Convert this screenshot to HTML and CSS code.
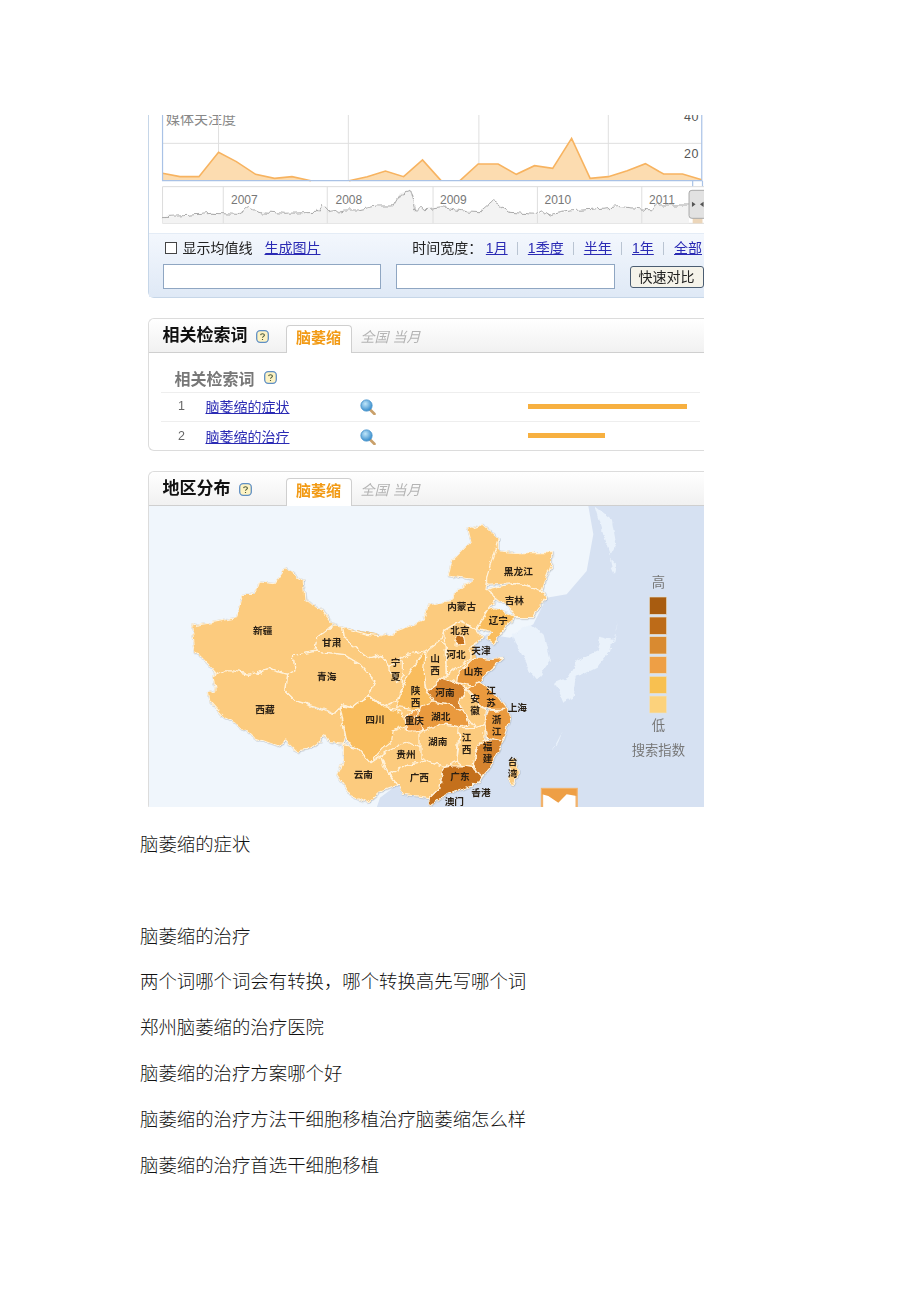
FILE: index.html
```html
<!DOCTYPE html>
<html lang="zh">
<head>
<meta charset="utf-8">
<title>脑萎缩</title>
<link rel="stylesheet" href="styles.css">
</head>
<body>
<svg class="defs" width="0" height="0" aria-hidden="true">
  <defs>
    <radialGradient id="lens" cx="40%" cy="35%" r="70%"><stop offset="0" stop-color="#bfe6fa"/><stop offset="1" stop-color="#2f86c8"/></radialGradient>
    <filter id="rough" x="-5%" y="-5%" width="110%" height="110%" color-interpolation-filters="sRGB">
      <feTurbulence type="fractalNoise" baseFrequency=".035" numOctaves="3" seed="4"/>
      <feDisplacementMap in="SourceGraphic" scale="20" xChannelSelector="R" yChannelSelector="G"/>
    </filter>
    <filter id="jitter" x="-2%" y="-20%" width="104%" height="140%" color-interpolation-filters="sRGB">
      <feTurbulence type="fractalNoise" baseFrequency=".06 .02" numOctaves="2" seed="9"/>
      <feDisplacementMap in="SourceGraphic" scale="22" xChannelSelector="R" yChannelSelector="G"/>
    </filter>
    <symbol id="help" viewBox="0 0 13 13">
      <rect x=".7" y=".7" width="11.6" height="11.6" rx="3.5" fill="#fdf3c4" stroke="#5f8fc4" stroke-width="1.3"/>
      <path d="M4.6 5.1C4.7 3.4 8.4 3.3 8.4 5.2 8.4 6.4 6.5 6.4 6.5 7.8M6.5 9v1" fill="none" stroke="#4c5a3a" stroke-width="1.1"/>
    </symbol>
    <symbol id="mag" viewBox="0 0 16 16">
      <path d="M10 10.5 14.5 15" stroke="#c9a06a" stroke-width="2.6" stroke-linecap="round"/>
      <circle cx="6.5" cy="6.5" r="5.6" fill="url(#lens)" stroke="#4d98cf"/>
    </symbol>
  </defs>
</svg>

<main class="figure">
  <section class="panel trend">
    <svg class="trend-chart" width="555" height="118" viewBox="149 115 555 118">
      <text class="chart-title" x="166" y="124">媒体关注度</text>
      <text class="axis" x="684" y="121">40</text>
      <text class="axis" x="684" y="158">20</text>
      <g transform="translate(140,105) scale(.3636,.3333)">
        <g class="grid">
          <path d="M216 0V227M573 0V227M932 0V227M1288 0V227M62 115H1545"/>
        </g>
        <path class="area" d="M62 205 110 215 162 215 216 142 265 170 318 208 370 220 418 215 470 227 575 227 625 215 675 198 725 215 777 165 828 227 880 227 930 177 985 177 1035 208 1085 182 1135 190 1187 100 1238 220 1288 215 1340 197 1390 176 1440 207 1492 207 1545 224V227H62Z"/>
        <path class="area-line" d="M62 205 110 215 162 215 216 142 265 170 318 208 370 220 418 215 470 227M575 227 625 215 675 198 725 215 777 165 828 227M880 227 930 177 985 177 1035 208 1085 182 1135 190 1187 100 1238 220 1288 215 1340 197 1390 176 1440 207 1492 207 1545 224"/>
        <path class="frame" d="M62 30V227H1545V30M1520 227V255M1547 227V255"/>
        <rect class="ov-box" x="62" y="245" width="1500" height="110"/>
        <path class="ov-fill" d="M62 335 120 332 200 325 265 328 295 308 330 320 400 325 490 322 500 298 520 322 560 315 600 315 650 303 695 303 715 265 745 255 758 312 800 310 830 305 870 312 900 318 935 320 970 287 1020 322 1090 328 1110 320 1125 330 1180 318 1250 312 1320 305 1410 315 1415 300 1510 300V355H62Z"/>
        <path class="ov-grid" d="M229 245V355M515 245V355M806 245V355M1093 245V355M1380 245V355"/>
        <g filter="url(#jitter)">
          <path class="ov-line" d="M62 335 120 332 200 325 265 328 295 308 330 320 400 325 490 322 500 298 520 322 560 315 600 315 650 303 695 303 715 265 745 255 758 312 800 310 830 305 870 312 900 318 935 320 970 287 1020 322 1090 328 1110 320 1125 330 1180 318 1250 312 1320 305 1410 315 1415 300 1510 300"/>
        </g>
        <rect class="handle-tail" x="1520" y="335" width="27" height="20"/>
        <rect class="handle" x="1510" y="256" width="50" height="84" rx="8"/>
        <path class="handle-arrows" d="M1518 290 1528 298 1518 306ZM1550 290 1540 298 1550 306Z"/>
      </g>
      <text class="year" x="231" y="204">2007</text>
      <text class="year" x="335.5" y="204">2008</text>
      <text class="year" x="440" y="204">2009</text>
      <text class="year" x="544.5" y="204">2010</text>
      <text class="year" x="649" y="204">2011</text>
    </svg>
    <div class="controls">
      <div class="row">
        <div class="row-left">
          <span class="check"></span>
          <span class="check-label">显示均值线</span>
          <a class="link" href="#">生成图片</a>
        </div>
        <div class="row-right">
          <span class="range-label">时间宽度：</span>
          <a class="link" href="#">1月</a><i class="sep"></i>
          <a class="link" href="#">1季度</a><i class="sep"></i>
          <a class="link" href="#">半年</a><i class="sep"></i>
          <a class="link" href="#">1年</a><i class="sep"></i>
          <a class="link" href="#">全部</a>
        </div>
      </div>
      <div class="row-inputs">
        <span class="field"></span>
        <span class="field"></span>
        <span class="btn">快速对比</span>
      </div>
    </div>
  </section>

  <section class="panel related">
    <header class="head">
      <div class="title-wrap"><h2 class="title">相关检索词</h2><svg class="help" width="13" height="13"><use href="#help"/></svg></div>
      <span class="tab">脑萎缩</span>
      <span class="scope">全国 当月</span>
    </header>
    <div class="table-head"><span>相关检索词</span><svg class="help" width="13" height="13"><use href="#help"/></svg></div>
    <div class="tr">
      <span class="num">1</span><a class="link" href="#">脑萎缩的症状</a>
      <svg class="mag" width="16" height="16"><use href="#mag"/></svg>
      <span class="bar" style="width:159px"></span>
    </div>
    <div class="tr">
      <span class="num">2</span><a class="link" href="#">脑萎缩的治疗</a>
      <svg class="mag" width="16" height="16"><use href="#mag"/></svg>
      <span class="bar" style="width:77px"></span>
    </div>
  </section>

  <section class="panel region">
    <header class="head">
      <div class="title-wrap"><h2 class="title">地区分布</h2><svg class="help" width="13" height="13"><use href="#help"/></svg></div>
      <span class="tab">脑萎缩</span>
      <span class="scope">全国 当月</span>
    </header>
    <svg class="map" width="555" height="302" viewBox="149 505 555 302">
      <g transform="translate(140,500) scale(.33333)">
        <g transform="translate(840,0)">
          <path class="sea" d="M505 15 520 100 500 210 440 280 380 290 340 370 270 410 200 400 150 450 100 600 0 800 -120 890 -130 920H860V15Z"/>
          <g class="isle" filter="url(#rough)">
            <path d="M280 400 330 370 370 400 390 480 350 535 325 500 290 430Z"/>
            <path d="M590 365 580 420 540 410 530 450 470 480 440 530 405 545 430 605 460 590 470 530 530 500 570 450Z"/>
            <path d="M525 15 575 55 588 130 572 160 550 95Z"/>
            <path d="M570 170 590 190 585 222 575 200Z"/>
            <path d="M425 688 412 720 395 750 405 725Z"/>
          </g>
          <g class="inset">
            <rect x="366" y="864" width="104" height="70"/>
            <path class="inset-land" d="M366 864H470V885L440 880 415 905 385 885 366 880Z"/>
          </g>
        </g>
        <g class="china">
          <g filter="url(#rough)">
            <g class="p0 base">
              <path d="M570 380 605 378 735 405 850 360 860 420 900 520 900 800 720 800 600 640 525 450Z"/>
              <path d="M840 400 1000 400 1010 560 1040 800 900 820 800 700Z"/>
            </g>
            <g class="p0">
              <path d="M155 375 215 365 290 350 305 280 345 280 360 240 405 245 440 197 490 240 495 300 540 320 580 370 570 378 530 410 525 450 460 465 465 510 440 520 390 505 330 520 280 510 250 510 235 525 205 490 165 450Z"/>
              <path d="M220 525 250 510 280 510 330 520 390 505 440 520 435 565 470 600 540 625 580 640 600 620 615 700 610 730 570 725 555 705 500 745 470 750 440 720 410 735 340 710 290 670 250 645 210 600 205 575 225 570Z"/>
              <path d="M460 465 530 450 610 460 660 490 705 540 690 580 665 600 640 620 600 610 585 640 540 620 470 600 435 565 440 520 465 510Z"/>
              <path d="M605 378 580 375 570 380 530 410 525 450 610 460 660 490 705 540 690 580 730 620 770 600 790 545 750 500 720 460 690 470 650 440 610 410Z"/>
              <path d="M750 470 790 480 790 520 770 545 750 510Z"/>
              <path d="M610 730 650 740 690 785 720 765 730 800 750 820 775 850 720 870 680 905 630 880 590 820 610 780Z"/>
              <path d="M720 765 760 740 800 720 840 740 860 780 800 790 750 820 730 790Z"/>
            </g>
            <g class="p1">
              <path d="M600 615 640 620 665 600 690 585 730 620 770 625 800 650 830 660 760 690 755 720 730 740 690 785 650 740 620 720Z"/>
              <path d="M855 450 855 560 885 600 850 640 820 625 770 620 790 545 820 500Z"/>
            </g>
            <path class="p2" d="M795 650 825 625 850 640 860 680 830 690 800 690Z"/>
            <g transform="translate(840,0)">
              <g class="p0">
                <path d="M-235 378-160 400-105 405-50 385 10 360 25 312 85 300 125 260 160 235 85 225 95 180 150 125 140 85 190 70 235 110 230 150 200 230 195 265 230 290 205 325 170 385 120 360 70 390 60 420 10 450-40 460-90 500-120 460-150 470-190 440-230 410Z"/>
                <path d="M235 110 235 150 290 155 395 155 395 190 375 240 365 270 290 245 200 250 200 230Z"/>
                <path d="M195 265 290 245 365 270 375 290 340 350 290 350 265 320 230 290Z"/>
                <path d="M70 390 120 360 170 385 190 410 150 440 150 470 120 495 80 520 75 430Z"/>
                <path d="M15 455 60 420 75 430 78 520 70 530 20 570 10 520Z"/>
                <path d="M140 565 175 610 200 625 195 670 165 680 135 640 115 600Z"/>
                <path d="M120 680 165 680 195 670 195 715 170 750 160 800 130 795 110 780 118 720Z"/>
                <path d="M0 690 60 670 118 680 110 780 70 800 20 780 0 770Z"/>
                <path d="M-90 820-40 790 20 780 70 800 60 860 30 890-50 880-65 850Z"/>
                <path d="M270 780 290 775 292 820 280 855 265 830Z"/>
              </g>
              <path class="p1" d="M230 320 290 350 265 370 220 430 200 415 215 395 170 385 205 325Z"/>
              <path class="p5" d="M105 432 112 405 130 405 135 430Z"/>
              <path class="p3" d="M115 510 160 470 215 475 248 472 205 510 180 545 155 555 110 545Z"/>
              <path class="p4" d="M20 570 70 530 110 545 140 565 115 600 130 630 90 610 40 600Z"/>
              <path class="p3" d="M140 565 155 555 180 545 225 580 260 625 205 625 175 610 150 570Z"/>
              <path class="p3" d="M205 630 262 625 270 660 250 720 200 710 195 670Z"/>
              <path class="p4" d="M195 715 250 720 210 800 185 830 160 790 170 750Z"/>
              <path class="p3" d="M0 615 40 600 90 610 130 630 145 665 120 680 60 670 10 690-10 650Z"/>
              <path class="p5" d="M70 800 95 795 130 795 160 800 185 825 170 850 100 870 60 890 30 915 30 890 60 860Z"/>
            </g>
          </g>
        </g>
        <g class="labels" transform="translate(0,-6)">
          <text x="368" y="393">新疆</text><text x="575" y="428">甘肃</text>
          <text x="767" y="490">宁</text><text x="767" y="530">夏</text>
          <text x="560" y="532">青海</text>
          <text x="827" y="573">陕</text><text x="827" y="608">西</text>
          <text x="885" y="477">山</text><text x="885" y="512">西</text>
          <text x="375" y="630">西藏</text><text x="705" y="660">四川</text>
          <text x="823" y="663">重庆</text><text x="798" y="765">贵州</text>
          <text x="670" y="825">云南</text><text x="838" y="835">广西</text>
          <g transform="translate(840,0)">
            <text x="295" y="215">黑龙江</text><text x="283" y="302">吉林</text>
            <text x="125" y="320">内蒙古</text><text x="235" y="362">辽宁</text>
            <text x="120" y="392">北京</text><text x="183" y="452">天津</text>
            <text x="108" y="465">河北</text><text x="160" y="515">山东</text>
            <text x="75" y="580">河南</text>
            <text x="213" y="573">江</text><text x="213" y="608">苏</text>
            <text x="165" y="598">安</text><text x="165" y="634">徽</text>
            <text x="292" y="625">上海</text>
            <text x="230" y="660">浙</text><text x="230" y="697">江</text>
            <text x="62" y="650">湖北</text><text x="53" y="727">湖南</text>
            <text x="140" y="713">江</text><text x="140" y="750">西</text>
            <text x="203" y="740">福</text><text x="203" y="778">建</text>
            <text x="278" y="787">台</text><text x="278" y="823">湾</text>
            <text x="120" y="830">广东</text><text x="183" y="880">香港</text>
            <text x="103" y="905">澳门</text>
            <text class="legend-text" x="715" y="248">高</text>
            <text class="legend-text" x="715" y="678">低</text>
            <text class="legend-text" x="715" y="752">搜索指数</text>
          </g>
        </g>
        <g transform="translate(840,0)">
          <rect class="swatch s1" x="688" y="288" width="52" height="52"/>
          <rect class="swatch s2" x="688" y="348" width="52" height="52"/>
          <rect class="swatch s3" x="688" y="407" width="52" height="52"/>
          <rect class="swatch s4" x="688" y="467" width="52" height="50"/>
          <rect class="swatch s5" x="688" y="526" width="52" height="51"/>
          <rect class="swatch s6" x="688" y="585" width="52" height="51"/>
        </g>
      </g>
    </svg>
  </section>
</main>

<article class="doc">
  <p>脑萎缩的症状</p>
  <p class="blank"></p>
  <p>脑萎缩的治疗</p>
  <p>两个词哪个词会有转换，哪个转换高先写哪个词</p>
  <p>郑州脑萎缩的治疗医院</p>
  <p>脑萎缩的治疗方案哪个好</p>
  <p>脑萎缩的治疗方法干细胞移植治疗脑萎缩怎么样</p>
  <p>脑萎缩的治疗首选干细胞移植</p>
</article>
</body>
</html>
```
FILE: styles.css
```css
* { box-sizing: border-box; }
html, body { margin: 0; padding: 0; background: #fff; }
body {
  font-family: "Liberation Sans", "Noto Sans CJK SC", sans-serif;
  color: #222;
  height: 1302px;
  overflow: hidden;
}
.defs { position: absolute; }
svg { display: block; }

.figure {
  margin: 115px 0 0 148px;
  width: 556px;
  height: 692px;
  overflow: hidden;
  display: flex;
  flex-direction: column;
  gap: 20px;
  filter: blur(.45px);
}
.panel {
  width: 556px;
  flex: none;
  border: 1px solid #dcdcdc;
  border-right: 0;
  border-radius: 6px 0 0 6px;
  background: #fff;
}

/* trend panel */
.trend {
  border: 0;
  border-left: 1px solid #c6d6e8;
  border-bottom: 1px solid #c6d6e8;
  border-radius: 0 0 0 6px;
  height: 183px;
}
.chart-title { font: 14px "Noto Sans CJK SC", sans-serif; fill: #888; }
.axis { font: 12.5px "Liberation Sans", sans-serif; fill: #555; letter-spacing: .5px; }
.year { font: 12px "Liberation Sans", sans-serif; fill: #777; }
.grid path { fill: none; stroke: #dfdfdf; stroke-width: 1; vector-effect: non-scaling-stroke; }
.area { fill: #fcdcb0; }
.area-line { fill: none; stroke: #f7b360; stroke-width: 1.6; vector-effect: non-scaling-stroke; }
.frame { fill: none; stroke: #a9c2e6; stroke-width: 1.2; vector-effect: non-scaling-stroke; }
.ov-box { fill: #fff; stroke: #dcdcdc; stroke-width: 1; vector-effect: non-scaling-stroke; }
.ov-fill { fill: #f3f3f3; }
.ov-grid { fill: none; stroke: #dedede; stroke-width: 1; vector-effect: non-scaling-stroke; }
.ov-line { fill: none; stroke: #aaa; stroke-width: 1; vector-effect: non-scaling-stroke; }
.handle-tail { fill: #ecd6ba; }
.handle { fill: #e2e2e2; stroke: #aaa; stroke-width: 1; vector-effect: non-scaling-stroke; }
.handle-arrows { fill: #555; }

.controls {
  height: 64px;
  padding: 4px 0 0 13.5px;
  background: linear-gradient(#f3f7fd, #dfe9f6);
  border-top: 1px solid #e4ecf6;
  display: flex;
  flex-direction: column;
  gap: 6px;
}
.row {
  height: 20px;
  padding-right: 2px;
  display: flex;
  justify-content: space-between;
  align-items: center;
  font-size: 14px;
  line-height: 20px;
}
.row-left, .row-right { display: flex; align-items: center; }
.row-left { padding-left: 2px; }
.row-right { gap: 9.6px; }
.check {
  width: 12px;
  height: 12px;
  border: 1px solid #444;
  background: #fff;
  margin-right: 6px;
}
.check-label { margin-right: 12px; }
.range-label { margin-right: -6px; }
.sep { width: 1px; height: 13px; background: #b9c4d2; }
.link { color: #2a2ab4; text-decoration: underline; }
.row-inputs { display: flex; gap: 15px; align-items: center; height: 25px; }
.field { width: 218.5px; height: 25px; background: #fff; border: 1px solid #8fa6c2; }
.btn {
  width: 74px;
  height: 22px;
  border: 1px solid #4b5d72;
  border-radius: 3px;
  background: #f5f3ea;
  font-size: 14px;
  line-height: 20px;
  text-align: center;
}

/* section headers */
.head {
  height: 34px;
  padding-left: 13.5px;
  display: flex;
  align-items: flex-end;
  background: linear-gradient(#fff, #f1f1f1);
  border-bottom: 1px solid #cfcfcf;
  border-radius: 6px 0 0 0;
}
.title-wrap { width: 123px; height: 33px; padding-top: 1px; display: flex; align-items: center; gap: 8px; }
.title { margin: 0; font-size: 17px; font-weight: 700; line-height: 20px; color: #111; }
.tab {
  width: 66px;
  height: 28px;
  margin-bottom: -1px;
  background: #fff;
  border: 1px solid #cfcfcf;
  border-bottom: 0;
  border-radius: 4px 4px 0 0;
  color: #f29a14;
  font-size: 15px;
  font-weight: 700;
  line-height: 24px;
  text-align: center;
}
.scope { margin: 0 0 5px 9px; font-size: 14px; line-height: 20px; font-style: italic; color: #b4b4b4; }

/* related table */
.related { height: 133px; }
.table-head {
  height: 40px;
  margin: 0 4px 0 12px;
  padding: 10px 0 0 13.5px;
  display: flex;
  align-items: center;
  gap: 9px;
  border-bottom: 1px solid #eee;
  font-size: 16px;
  font-weight: 700;
  color: #777;
}
.tr {
  height: 29px;
  margin: 0 4px 0 12px;
  padding-bottom: 2px;
  display: grid;
  grid-template-columns: 44.5px 154.5px 167.5px 1fr;
  align-items: center;
  font-size: 14px;
  border-bottom: 1px solid #eee;
}
.tr:last-child { border-bottom: 0; }
.num { padding-left: 17px; color: #666; font-size: 12.5px; }
.bar { display: block; height: 5px; background: #f7b040; }
.mag { margin-top: 2px; }

/* map */
.region { height: 340px; }
.map { background: #f0f6fc; }
.sea { fill: #d6e1f2; }
.isle path { fill: #eaf2fb; }
.inset rect { fill: #fff; stroke: #f2b36c; stroke-width: 7; }
.inset-land { fill: #ee9f45; }
.china { filter: drop-shadow(1px 1px 1px #9ba5b2); }
.china path { stroke: #fff3dd; stroke-width: 3.5; stroke-linejoin: round; }
.china .base path { stroke: none; }
.p0 { fill: #fccb7e; }
.p1 { fill: #f9bd5e; }
.p2 { fill: #f0a24c; }
.p3 { fill: #ea9a3e; }
.p4 { fill: #d7842e; }
.p5 { fill: #c4701c; }
.labels text {
  font: 700 29px "Noto Sans CJK SC", sans-serif;
  fill: #2a2015;
  text-anchor: middle;
  dominant-baseline: central;
}
.labels .legend-text { font-size: 40px; font-weight: 400; fill: #777; }
.swatch { stroke: #e8e2d0; stroke-width: 2; }
.s1 { fill: #a85c10; }
.s2 { fill: #bd6b18; }
.s3 { fill: #d98a30; }
.s4 { fill: #ee9f45; }
.s5 { fill: #f8c050; }
.s6 { fill: #fcd27c; }

/* document text */
.doc {
  margin-top: 26px;
  padding-left: 140px;
  display: flex;
  flex-direction: column;
  gap: 21.8px;
  font-family: "Liberation Serif", "Noto Sans CJK SC", serif;
  font-size: 18.4px;
  font-weight: 300;
  line-height: 24px;
  color: #111;
}
.doc p { margin: 0; }
.blank { height: 24px; }
```
